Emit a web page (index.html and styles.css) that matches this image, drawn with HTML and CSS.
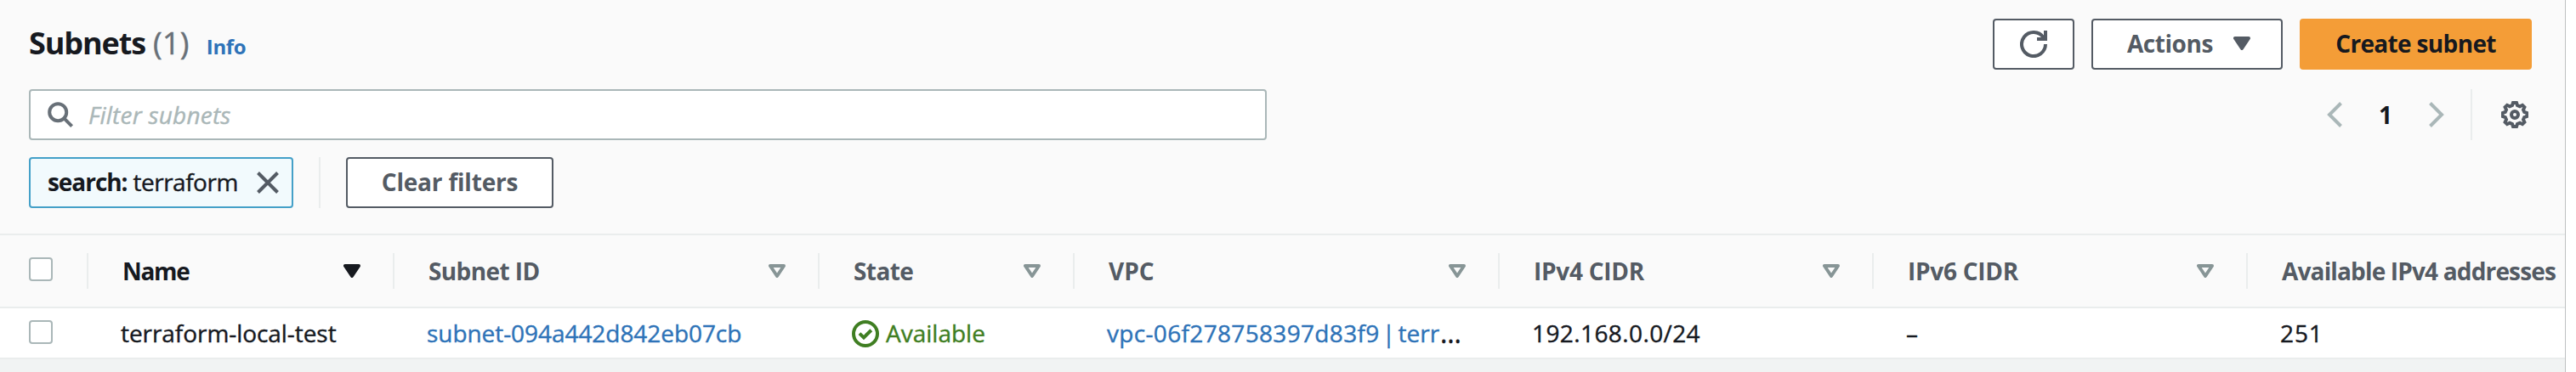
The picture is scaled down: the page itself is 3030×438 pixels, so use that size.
FILE: index.html
```html
<!DOCTYPE html>
<html lang="en"><head><meta charset="utf-8"><title>Subnets</title><link rel="stylesheet" href="styles.css"></head>
<body>
<main class="panel">
<header class="header">
<div class="title-row">
<h1 class="title"><span class="name">Subnets</span><span class="count">(1)</span><a class="info">Info</a></h1>
<div class="actions">
<button class="btn btn-icon"><svg class="icon" viewBox="0 0 16 16"><path d="M15 8A7 7 0 1 1 13.8 4.1M10 5h5V0"/></svg></button>
<button class="btn btn-menu"><span class="actions-label">Actions</span><svg class="caret" viewBox="0 0 20 16"><path d="M2 2h16l-8 12z"/></svg></button>
<button class="btn btn-primary"><span class="create-label">Create subnet</span></button>
</div>
</div>
<div class="filter-row">
<div class="search"><svg class="icon" viewBox="0 0 16 16"><circle cx="6.6" cy="6.6" r="5"/><path d="M10.2 10.2l4.6 4.6"/></svg><span class="placeholder">Filter subnets</span></div>
<div class="pager">
<svg class="chevron" viewBox="0 0 18 30"><path d="M16.5 1.5L3 15l13.5 13.5"/></svg>
<span class="page">1</span>
<svg class="chevron" viewBox="0 0 18 30"><path d="M1.5 1.5L15 15 1.5 28.5"/></svg>
<span class="rule"></span>
<svg class="icon gear" viewBox="0 0 32 32"><path d="M14 2h4l1 3 3 1.200 3-1.400 2.400 2.400-1.400 3 1.200 2.800 3 1v4l-3 1-1.200 2.800 1.400 3-2.400 2.400-3-1.400-3 1.200-1 3h-4l-1-3-3-1.200-3 1.400-2.400-2.400 1.400-3-1.200-2.800-3-1v-4l3-1 1.200-2.800-1.400-3 2.400-2.400 3 1.400 3-1.200z"/><circle cx="16" cy="16" r="4"/></svg>
</div>
</div>
<div class="token-row">
<div class="token"><b class="token-key">search:</b><span class="token-value">terraform</span><svg class="close" viewBox="0 0 26 26"><path d="M1.5 1.5l23 23M24.5 1.5l-23 23"/></svg></div>
<span class="rule"></span>
<button class="btn btn-clear"><span class="clear-label">Clear filters</span></button>
</div>
</header>
<section class="table">
<div class="row head">
<div class="cell"><span class="checkbox"></span></div>
<div class="cell sorted"><span class="h-name">Name</span><svg class="caret" viewBox="0 0 20 16"><path d="M2 2h16l-8 12z"/></svg></div>
<div class="cell"><span class="h-id">Subnet ID</span><svg class="caret hollow" viewBox="0 0 20 16"><path d="M2 2h16l-8 12z"/></svg></div>
<div class="cell"><span class="h-state">State</span><svg class="caret hollow" viewBox="0 0 20 16"><path d="M2 2h16l-8 12z"/></svg></div>
<div class="cell"><span class="h-vpc">VPC</span><svg class="caret hollow" viewBox="0 0 20 16"><path d="M2 2h16l-8 12z"/></svg></div>
<div class="cell"><span class="h-cidr">IPv4 CIDR</span><svg class="caret hollow" viewBox="0 0 20 16"><path d="M2 2h16l-8 12z"/></svg></div>
<div class="cell"><span class="h-cidr">IPv6 CIDR</span><svg class="caret hollow" viewBox="0 0 20 16"><path d="M2 2h16l-8 12z"/></svg></div>
<div class="cell"><span class="h-avail">Available IPv4 addresses</span></div>
</div>
<div class="row body">
<div class="cell"><span class="checkbox"></span></div>
<div class="cell"><span class="c-name">terraform-local-test</span></div>
<div class="cell"><a class="c-id">subnet-094a442d842eb07cb</a></div>
<div class="cell state"><svg class="icon" viewBox="0 0 16 16"><circle cx="8" cy="8" r="7"/><path d="M4.500 7.800L7 10.200l4.400-4.300"/></svg><span class="c-state">Available</span></div>
<div class="cell"><a class="c-vpc"><span class="vpc-id">vpc-06f278758397d83f9</span> | terr</a><span class="dots">…</span></div>
<div class="cell"><span class="c-v4">192.168.0.0/24</span></div>
<div class="cell"><span class="c-v6">–</span></div>
<div class="cell"><span class="c-avail">251</span></div>
</div>
</section>
</main>
</body></html>
```
FILE: styles.css
```css
* { box-sizing: border-box; }
body { margin: 0; width: 3030px; height: 438px; overflow: hidden; background: #fff; font-family: "Open Sans", "Noto Sans", sans-serif; font-size: 28px; line-height: 38px; color: #16191f; }
.panel { width: 3018px; height: 438px; background: #f1f3f3; border-right: 1px solid #bfc1c2; overflow: hidden; }
.header { height: 277px; padding: 22px 39px 0 34px; background: #fafafa; border-bottom: 2px solid #eaeded; display: flex; flex-direction: column; }
.title-row { display: flex; justify-content: space-between; height: 60px; margin-bottom: 23px; }
.title { display: flex; align-items: baseline; margin: 0; height: 60px; line-height: 58px; font-size: 36px; }
.name { letter-spacing: -1.1px; }
.count { font-weight: 400; color: #687078; margin-left: 9px; letter-spacing: .3px; -webkit-text-stroke: .5px currentColor; }
.info { font-size: 24px; color: #2e73b8; margin-left: 20px; letter-spacing: -.3px; }
.actions { display: flex; gap: 20px; }
.btn { display: flex; align-items: center; justify-content: center; height: 60px; padding: 0 0 2px; border: 2px solid #545b64; border-radius: 4px; background: #fff; color: #545b64; font: 700 28px/38px "Open Sans", "Noto Sans", sans-serif; white-space: nowrap; }
.btn-icon { width: 96px; padding: 0; }
.btn-menu { width: 225px; gap: 24px; padding-left: 40px; justify-content: flex-start; }
.btn-primary { width: 273px; background: #f49d37; border-color: #f49d37; color: #16191f; }
.btn-clear { width: 244px; }
.actions-label { letter-spacing: -.45px; }
.create-label { letter-spacing: -.66px; }
.clear-label { letter-spacing: -.2px; }
.icon { width: 32px; height: 32px; flex: none; fill: none; stroke: #545b64; stroke-width: 2; }
.gear { stroke-width: 4; }
.caret { width: 20px; height: 16px; flex: none; fill: currentColor; stroke: currentColor; stroke-width: 4; stroke-linejoin: round; }
.hollow { fill: none; color: #879596; }
.filter-row { display: flex; justify-content: space-between; height: 60px; margin-bottom: 20px; }
.search { display: flex; align-items: center; width: 1456px; height: 60px; padding-left: 19px; background: #fff; border: 2px solid #aab7b8; border-radius: 4px; }
.search .icon { stroke: #687078; }
.placeholder { margin-left: 17px; font-style: italic; color: #aab7b8; letter-spacing: .2px; -webkit-text-stroke: .4px currentColor; }
.pager { display: flex; align-items: center; padding-right: 4px; }
.chevron { width: 18px; height: 30px; fill: none; stroke: #aab7b8; stroke-width: 4; }
.page { width: 102px; text-align: center; font-weight: 700; padding-bottom: 1px; }
.rule { width: 2px; height: 60px; background: #eaeded; }
.pager .rule { margin: 0 34px 0 31px; }
.token-row { display: flex; }
.token { display: flex; align-items: center; width: 311px; height: 60px; padding-left: 20px; border: 2px solid #44a0c8; border-radius: 4px; background: #f2fafd; white-space: nowrap; }
.token-key, .token-value { padding-bottom: 2px; }
.token-key { letter-spacing: -1.05px; }
.token-value { margin-left: 7px; letter-spacing: -.5px; -webkit-text-stroke: .4px currentColor; }
.close { width: 26px; height: 26px; margin-left: auto; margin-right: 15px; fill: none; stroke: #545b64; stroke-width: 4; }
.token-row .rule { margin: 0 30px; }
.row { display: grid; grid-template-columns: 104px 360px 500px 300px 500px 440px 440px 373px; }
.cell { display: flex; align-items: center; white-space: nowrap; }
.head { height: 86px; border-bottom: 2px solid #eaeded; background: #fafafa; color: #545b64; font-weight: 700; }
.head .cell { height: 42px; margin-top: 21px; padding: 0 38px 0 40px; justify-content: space-between; border-right: 2px solid #eaeded; }
.head .cell:last-child { border: 0; padding: 0 0 0 40px; }
.head .sorted { color: #16191f; }
.head .cell span { padding-bottom: 1px; }
.row .cell:first-child { padding: 0 0 0 34px; }
.head .checkbox { margin-bottom: 4px; }
.checkbox { width: 28px; height: 28px; background: #fff; border: 2px solid #aab7b8; border-radius: 4px; }
.body { height: 60px; background: #fff; border-bottom: 2px solid #eaeded; -webkit-text-stroke: .4px currentColor; }
.body .cell { padding-left: 38px; }
.body .checkbox { margin-bottom: 2px; }
.body a { color: #2e73b8; }
.h-name { letter-spacing: -1.3px; }
.h-id, .h-state { letter-spacing: -.6px; }
.h-cidr { letter-spacing: -.27px; }
.h-avail { letter-spacing: -.84px; }
.c-name, .c-id { letter-spacing: -.06px; }
.c-vpc { word-spacing: -4px; }
.vpc-id { letter-spacing: .33px; }
.c-v4 { letter-spacing: .4px; }
.c-avail { letter-spacing: .9px; }
.dots { font-size: 32px; margin-left: 1px; letter-spacing: 0; }
.state { color: #3f7e22; }
.state .icon { stroke: #3f7e22; margin-top: 2px; }
.c-state { margin-left: 8px; }
```
